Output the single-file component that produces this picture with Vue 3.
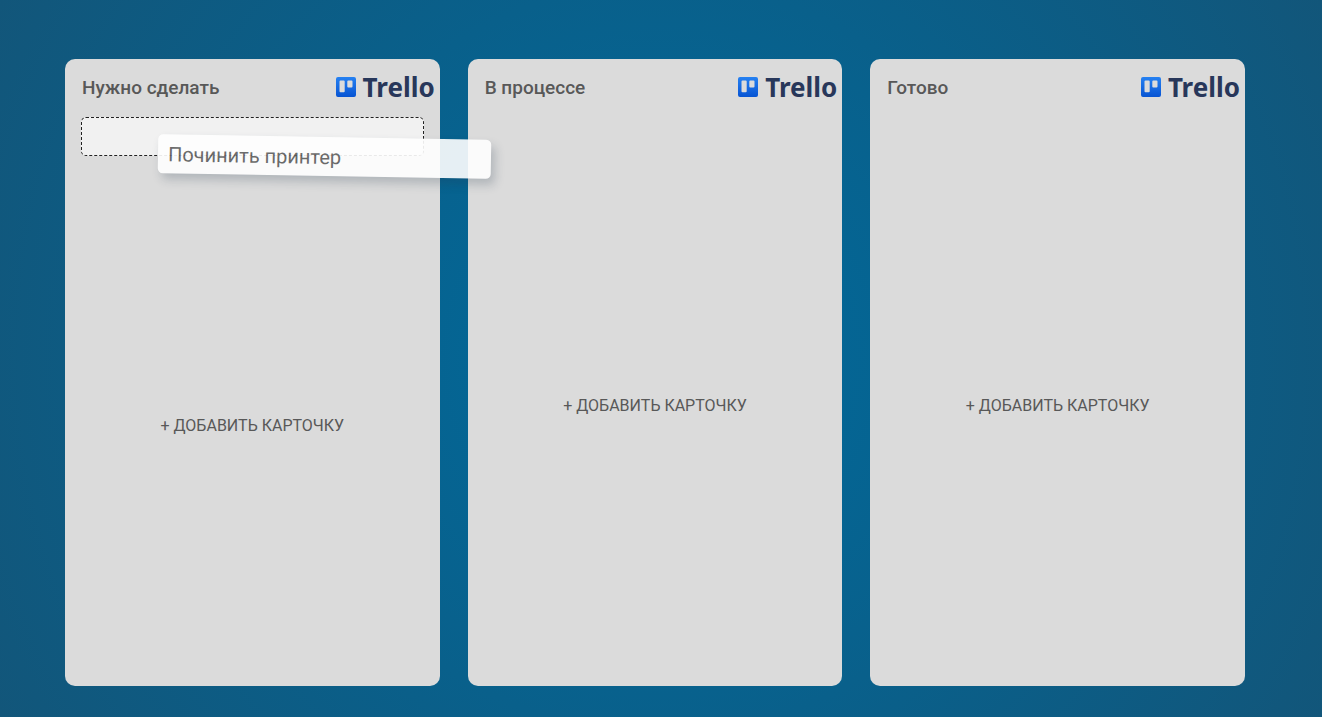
<script setup>
const columns = [
  { id: 'todo', title: 'Нужно сделать', dragged: 'Починить принтер' },
  { id: 'progress', title: 'В процессе', dragged: null },
  { id: 'done', title: 'Готово', dragged: null },
]
</script>

<template>
  <main class="board">
    <section v-for="column in columns" :key="column.id" class="column">
      <header class="column-header">
        <h2 class="column-title">{{ column.title }}</h2>
        <div class="logo">
          <svg class="logo-mark" viewBox="0 0 20 20" aria-hidden="true">
            <defs>
              <linearGradient :id="'mark-' + column.id" x1="0" y1="0" x2="0" y2="1">
                <stop offset="0" stop-color="#2681f2" />
                <stop offset="1" stop-color="#0754d3" />
              </linearGradient>
            </defs>
            <path
              :fill="'url(#mark-' + column.id + ')'"
              fill-rule="evenodd"
              d="M2 0h16a2 2 0 0 1 2 2v16a2 2 0 0 1-2 2H2a2 2 0 0 1-2-2V2a2 2 0 0 1 2-2ZM4.500 3.500a1 1 0 0 0-1 1v9.700a1 1 0 0 0 1 1h3.200a1 1 0 0 0 1-1V4.500a1 1 0 0 0-1-1ZM12.300 3.500a1 1 0 0 0-1 1v5a1 1 0 0 0 1 1h3.200a1 1 0 0 0 1-1v-5a1 1 0 0 0-1-1Z"
            />
          </svg>
          <span class="logo-name">Trello</span>
        </div>
      </header>
      <div class="list">
        <div v-if="column.dragged" class="slot">
          <article class="card">{{ column.dragged }}</article>
        </div>
      </div>
      <button type="button" class="add">+ Добавить карточку</button>
    </section>
  </main>
</template>

<style>
body {
  margin: 0;
}
</style>

<style scoped>
.board {
  box-sizing: border-box;
  min-height: 100vh;
  display: grid;
  grid-template-columns: repeat(3, minmax(0, 1fr));
  gap: 28px;
  padding: 59px 77px 31px 65px;
  background: radial-gradient(circle, #006a9c 0%, #12567a 100%);
  font-family: Roboto, "Liberation Sans", sans-serif;
  color: #585858;
}

.column {
  display: flex;
  flex-direction: column;
  border-radius: 10px;
  background: #dbdbdb;
}

.column-header {
  display: flex;
  align-items: flex-start;
  justify-content: space-between;
  box-sizing: border-box;
  height: 58px;
  padding: 14px 5px 0 17px;
}

.column-title {
  margin: 0;
  font-size: 19px;
  line-height: 30px;
  font-weight: 500;
}

.logo {
  display: flex;
  align-items: center;
  gap: 7px;
}

.logo-mark {
  width: 20px;
  height: 20px;
}

.logo-name {
  font-family: "Noto Sans", sans-serif;
  font-size: 26px;
  line-height: 28px;
  font-weight: 700;
  color: #28375a;
}

.list {
  padding: 0 16px;
}

.slot {
  position: relative;
  box-sizing: border-box;
  height: 39px;
  border: 1px dashed #222;
  border-radius: 5px;
  background: #f1f1f1;
}

.card {
  position: absolute;
  top: 19px;
  left: 76px;
  z-index: 1;
  box-sizing: border-box;
  width: calc(100% - 8px);
  height: 39px;
  padding: 0 10px;
  border-radius: 5px;
  background: #fff;
  box-shadow: 4px 6px 10px rgba(40, 60, 80, 0.25);
  color: #5e5e5e;
  font-size: 20px;
  line-height: 41px;
  opacity: 0.9;
  transform: rotate(1deg);
}

.add {
  flex: 1;
  margin: 9px 0 0;
  padding: 0;
  border: 0;
  background: none;
  color: inherit;
  font-family: inherit;
  font-size: 16px;
  line-height: 20px;
  text-transform: uppercase;
  cursor: pointer;
}
</style>
